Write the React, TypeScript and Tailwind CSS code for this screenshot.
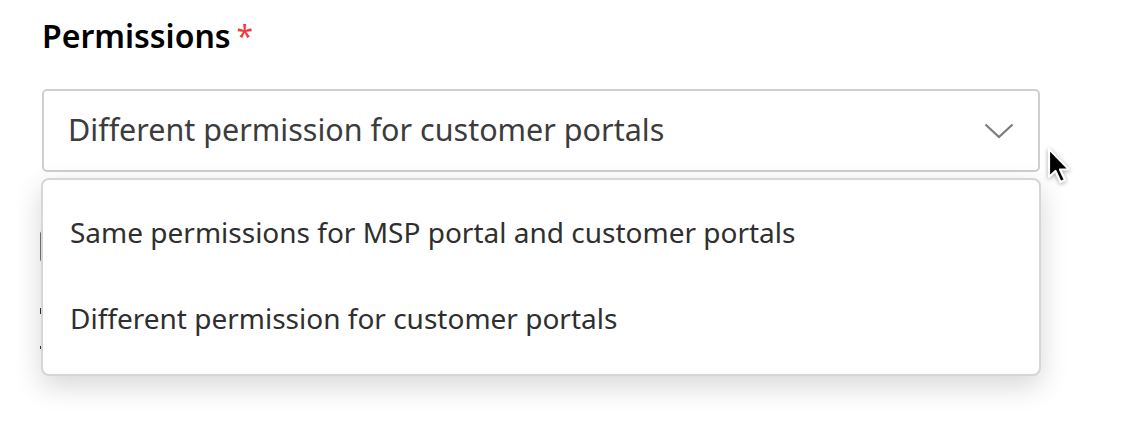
import React from "react";

const font = { fontFamily: '"Noto Sans", "Open Sans", Arial, sans-serif' };

function Chevron() {
  return (
    <svg width="30" height="16" viewBox="0 0 30 16" fill="none">
      <path d="M1.5 1.5 L15 14 L28.5 1.5" stroke="#7b7b7b" strokeWidth="2.2" />
    </svg>
  );
}

function Cursor() {
  return (
    <svg width="30" height="42" viewBox="0 0 30 42" className="absolute left-[1046px] top-[147px] drop-shadow-[0_1px_2px_rgba(0,0,0,0.35)]">
      <path
        d="M3 2 L3 30 L9.5 24 L14.5 35 L19 33 L14 22.5 L23 22.5 Z"
        fill="#000"
        stroke="#fff"
        strokeWidth="2.2"
        strokeLinejoin="round"
      />
    </svg>
  );
}

export default function App() {
  return (
    <div className="relative w-[1134px] h-[430px] bg-white overflow-hidden" style={font}>
      <div className="pl-[42px] pt-[13px] w-[1040px]">
        <div className="flex items-start gap-[6px] h-[45px]">
          <span className="text-[32px] font-semibold leading-[45px] text-black">Permissions</span>
          <span className="text-[30px] leading-[45px] text-[#ef3b3b]">*</span>
        </div>

        <div className="mt-[31px] h-[83px] border-2 border-[#cfcfcf] rounded-[5px] flex items-center justify-between pl-[24px] pr-[24px]">
          <span className="text-[30.5px] text-[#3c3c3c] -mt-[2px]">Different permission for customer portals</span>
          <Chevron />
        </div>

        {/* content hidden behind the open menu */}
        <div className="mt-[59px] ml-[-2px] flex flex-col items-start">
          <div className="w-[30px] h-[31px] border-2 border-[#777] rounded-[3px]" />
          <div className="mt-[46px] w-[3px] h-[6px] bg-[#333]" />
          <div className="mt-[32px] w-[3px] h-[3px] bg-[#333]" />
        </div>
      </div>

      <div className="absolute left-[41px] top-[178px] w-[1000px] h-[198px] bg-white border-2 border-[#d6d6d6] rounded-[8px] shadow-[0_10px_28px_rgba(0,0,0,0.16)] flex flex-col justify-center">
        <div className="h-[86px] flex items-center pl-[27px] pb-[4px] text-[28px] text-[#2f2f2f]">
          Same permissions for MSP portal and customer portals
        </div>
        <div className="h-[86px] flex items-center pl-[27px] pb-[4px] text-[28px] text-[#2f2f2f]">
          Different permission for customer portals
        </div>
      </div>

      <Cursor />
    </div>
  );
}
